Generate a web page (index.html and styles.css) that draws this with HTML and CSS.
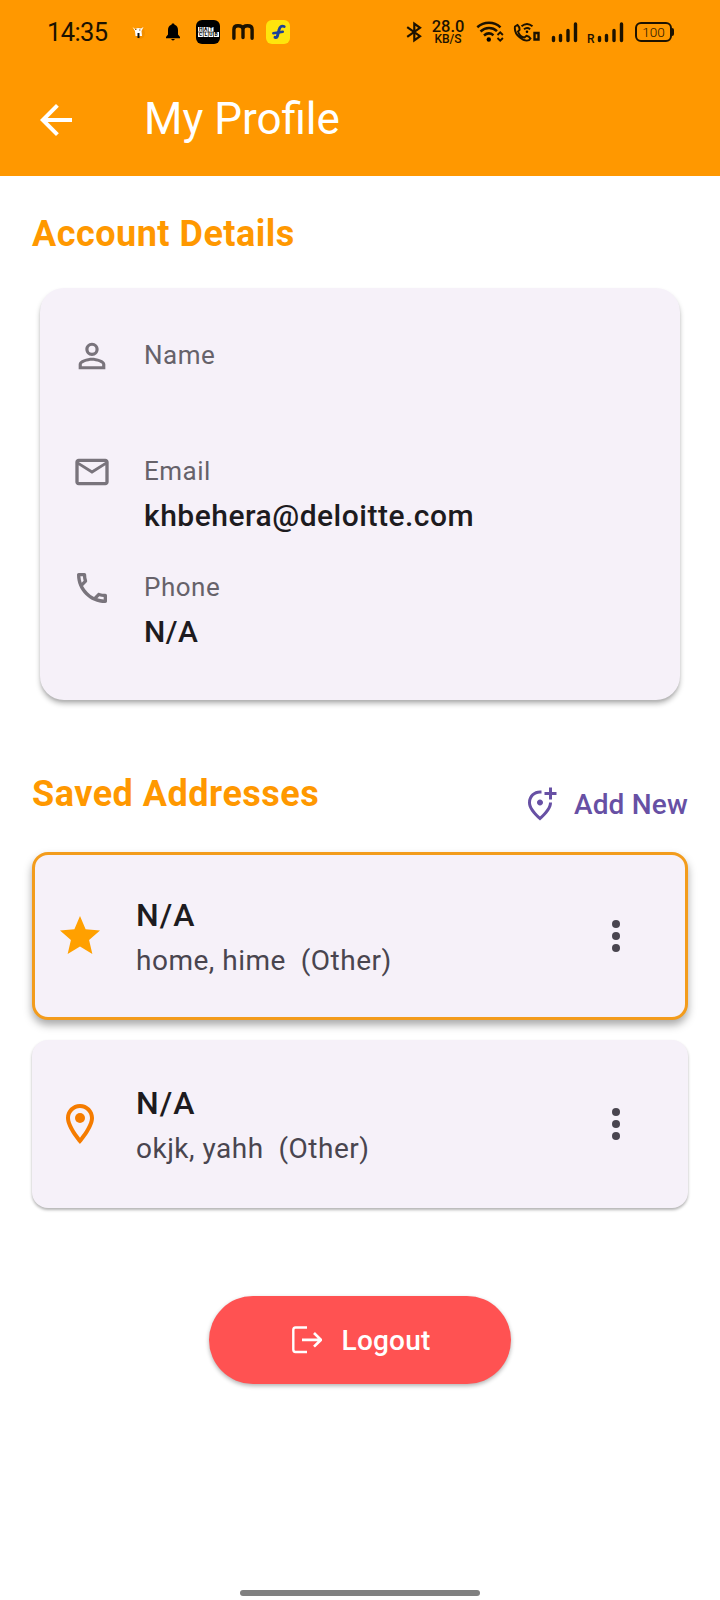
FILE: index.html
```html
<!DOCTYPE html>
<html lang="en">
<head>
<meta charset="utf-8">
<title>My Profile</title>
<link rel="stylesheet" href="styles.css">
</head>
<body>
<div class="screen">
  <header class="header">
    <div class="status">
      <span class="clock">14:35</span>
      <div class="notifications">
        <svg class="n-spark" width="16" height="24" viewBox="0 0 16 24"><ellipse cx="10" cy="13" rx="5" ry="6" fill="#d97d00" opacity=".35"/><path d="M2.500 7l2.500 2 3-1 3 .5 2.500-1.500-2 4 .5 5H5.500l-.5-5z" fill="#fff"/><path d="M8.500 13v5" stroke="#111" stroke-width="2"/><path d="M5 9.500h1.500M9 10h1.500" stroke="#8a6a30" stroke-width="1"/></svg>
        <svg class="n-bell" width="16" height="24" viewBox="0 0 16 24"><path d="M8 3.500c1 0 1.500.500 1.500 1.300C12 5.600 13 7.700 13 10v4.500l2 2.500v1.300H1V17l2-2.500V10c0-2.300 1-4.400 3.500-5.200C6.500 4 7 3.500 8 3.500zM6.300 19h3.400c0 .8-.7 1.400-1.700 1.400S6.300 19.800 6.300 19z"/></svg>
        <svg class="n-club" width="24" height="24" viewBox="0 0 24 24"><rect width="24" height="24" rx="6"/><path d="M2 7h15.500v5H23v5H2z" fill="#fff"/><path d="M7.300 7v10M12.300 7v10M17.500 12v5M2 12h16" stroke="#000" stroke-width=".6"/><text class="tile" x="3" y="11.300">H</text><text class="tile" x="8.100" y="11.300">A</text><text class="tile" x="13.500" y="11.300">T</text><text class="tile" x="3" y="16.300">C</text><text class="tile" x="8.600" y="16.300">L</text><text class="tile" x="13.200" y="16.300">U</text><text class="tile" x="18.600" y="16.300">B</text></svg>
        <svg class="n-m" width="22" height="24" viewBox="0 0 22 24"><path d="M1.900 18.300V9.500Q1.900 5.800 6 5.800Q11 5.800 11 9.500V17.500M11 9.500Q11 5.800 15.500 5.800Q20.100 5.800 20.100 9.500V18.300" fill="none" stroke="#1c1200" stroke-width="3.400" stroke-linecap="round"/></svg>
        <svg class="n-f" width="24" height="24" viewBox="0 0 24 24"><rect width="24" height="24" rx="6" fill="#ffe50d"/><path d="M18.200 6.500C15.300 5.500 13.800 6.800 13.200 9.500L11.300 16.500Q10.800 17.800 9 17.300" fill="none" stroke="#1d4298" stroke-width="2.900" stroke-linecap="round"/><path d="M7.300 13.300L16.800 11.700" stroke="#1d4298" stroke-width="2.500" stroke-linecap="round"/></svg>
      </div>
      <div class="system">
        <svg class="s-bt" width="16" height="24" viewBox="0 0 16 24"><path d="M1.200 7.200l12.800 9L8.300 20.300V3.700L14 7.800 1.200 16.800" fill="none" stroke="#1c1200" stroke-width="2.200"/></svg>
        <div class="speed"><b>28.0</b><span>KB/S</span></div>
        <svg class="s-wifi" width="28" height="24" viewBox="0 0 28 24"><g fill="none" stroke="#1c1200" stroke-width="2.500"><path d="M1.300 7.300C8 1.300 18 1.300 24.500 7.300"/><path d="M4.500 11.500c5-4.500 12-4.500 16.500-.3"/><path d="M8 15.500c3-2.600 6.500-2.600 9.500-.3"/><path d="M21.500 15l2.700-2.600 2.700 2.600M21.500 18l2.700 2.600 2.700-2.600" stroke-width="1.900"/></g><circle cx="12.800" cy="19.500" r="2.200"/></svg>
        <svg class="s-call" width="28" height="24" viewBox="0 0 28 24"><g fill="none" stroke="#1c1200" stroke-width="1.900"><path d="M2 6.500l2.500-1.500Q7 7.500 6.500 10L5 11.500c1 3 3.500 5.500 6.500 6l2-1.700q2.500.2 4 2.700l-1.500 1.700c-5 1.800-15.500-5-14-13.700z"/><path d="M8.500 6.300c3.500-3 7.500-3 11 0M11 9.300c2-1.700 4-1.700 6.200 0"/><path d="M21.500 13h4v6.500h-4z" stroke-width="2.400"/></g><circle cx="14" cy="11.700" r="1.300"/></svg>
        <svg class="s-signal" width="28" height="24" viewBox="0 0 28 24"><path d="M2.500 17.500v3M9.500 15.500v5M17 10.500v10M24.500 4v16.500" stroke="#1c1200" stroke-width="3.400" stroke-linecap="round"/></svg>
        <span class="roam">R</span>
        <svg class="s-signal2" width="28" height="24" viewBox="0 0 28 24"><path d="M2.500 17.500v3M9.500 15.500v5M17 10.500v10M24.500 4v16.500" stroke="#1c1200" stroke-width="3.400" stroke-linecap="round"/></svg>
        <div class="battery"><span>100</span></div><i class="nub"></i>
      </div>
    </div>
    <div class="appbar">
      <svg class="back" width="48" height="48" viewBox="0 0 24 24"><path d="M20 11H7.830l5.590-5.590L12 4l-8 8 8 8 1.410-1.410L7.830 13H20v-2z" fill="#fff"/></svg>
      <h1>My Profile</h1>
    </div>
  </header>

  <main class="content">
    <h2 class="section">Account Details</h2>
    <section class="account">
      <div class="field">
        <svg width="40" height="40" viewBox="0 0 24 24"><path d="M12 5.900a2.100 2.100 0 1 1 0 4.200 2.100 2.100 0 0 1 0-4.200m0 9c2.970 0 6.100 1.460 6.100 2.100v1.100H5.900V17c0-.640 3.130-2.100 6.100-2.100M12 4C9.790 4 8 5.790 8 8s1.790 4 4 4 4-1.790 4-4-1.790-4-4-4zm0 9c-2.670 0-8 1.340-8 4v3h16v-3c0-2.660-5.330-4-8-4z"/></svg>
        <div><p class="label">Name</p><p class="value"></p></div>
      </div>
      <div class="field">
        <svg width="40" height="40" viewBox="0 0 24 24"><path d="M22 6c0-1.100-.9-2-2-2H4c-1.100 0-2 .9-2 2v12c0 1.100.9 2 2 2h16c1.100 0 2-.9 2-2V6zm-2 0l-8 5-8-5h16zm0 12H4V8l8 5 8-5v10z"/></svg>
        <div><p class="label">Email</p><p class="value">khbehera@deloitte.com</p></div>
      </div>
      <div class="field">
        <svg width="40" height="40" viewBox="0 0 24 24"><path d="M6.540 5c.06.890.210 1.760.450 2.590l-1.200 1.200c-.410-1.200-.670-2.470-.760-3.790h1.510m9.860 12.020c.850.240 1.720.390 2.600.450v1.490c-1.320-.090-2.590-.350-3.800-.750l1.200-1.190M7.500 3H4c-.550 0-1 .450-1 1 0 9.390 7.610 17 17 17 .550 0 1-.450 1-1v-3.490c0-.550-.450-1-1-1-1.240 0-2.450-.200-3.570-.570-.100-.040-.210-.050-.310-.050-.260 0-.510.100-.710.290l-2.200 2.200c-2.830-1.450-5.150-3.760-6.590-6.590l2.200-2.200c.280-.280.360-.670.250-1.020C8.700 6.450 8.500 5.250 8.500 4c0-.550-.450-1-1-1z"/></svg>
        <div><p class="label">Phone</p><p class="value">N/A</p></div>
      </div>
    </section>

    <div class="section-row">
      <h2 class="section">Saved Addresses</h2>
      <a class="add">
        <svg width="36" height="36" viewBox="0 0 24 24"><path d="M20 1v3h3v2h-3v3h-2V6h-3V4h3V1h2zM12 13c1.100 0 2-.9 2-2s-.9-2-2-2-2 .9-2 2 .9 2 2 2zm1-9.940v2.020A5.440 5.440 0 0 0 12 5c-3.350 0-6 2.570-6 6.200 0 2.340 1.950 5.440 6 9.140 4.050-3.700 6-6.790 6-9.140V11h2v.2c0 3.320-2.670 7.250-8 11.800-5.330-4.550-8-8.480-8-11.800C4 6.220 7.800 3 12 3c.340 0 .670.020 1 .06z"/></svg>
        <span>Add New</span>
      </a>
    </div>

    <section class="addresses">
      <article class="address address--default">
        <svg class="lead" width="48" height="48" viewBox="0 0 24 24"><path d="M12 17.270L18.180 21l-1.640-7.030L22 9.240l-7.190-.610L12 2 9.190 8.630 2 9.240l5.460 4.730L5.820 21z" fill="#ffa000"/></svg>
        <div class="text"><p class="name">N/A</p><p class="detail">home, hime&nbsp; (Other)</p></div>
        <svg class="more" width="48" height="48" viewBox="0 0 24 24"><circle cx="12" cy="6" r="2"/><circle cx="12" cy="12" r="2"/><circle cx="12" cy="18" r="2"/></svg>
      </article>
      <article class="address">
        <svg class="lead" width="48" height="48" viewBox="0 0 24 24"><path d="M12 2C8.130 2 5 5.130 5 9c0 5.250 7 13 7 13s7-7.750 7-13c0-3.870-3.130-7-7-7zM7 9c0-2.760 2.240-5 5-5s5 2.240 5 5c0 2.880-2.880 7.190-5 9.880C9.920 16.210 7 11.850 7 9z" fill="#f57c00"/><circle cx="12" cy="9" r="2.500" fill="#f57c00"/></svg>
        <div class="text"><p class="name">N/A</p><p class="detail">okjk, yahh&nbsp; (Other)</p></div>
        <svg class="more" width="48" height="48" viewBox="0 0 24 24"><circle cx="12" cy="6" r="2"/><circle cx="12" cy="12" r="2"/><circle cx="12" cy="18" r="2"/></svg>
      </article>
    </section>

    <button class="logout">
      <svg width="32" height="32" viewBox="0 0 32 32" fill="none" stroke="#fff"><path d="M17 3.500H5.500Q3.300 3.500 3.300 6v19.500Q3.300 28 5.500 28H17" stroke-width="2.400"/><path d="M12 15.800h19M24 9l7 6.800-7 6.800" stroke-width="2.700"/></svg>
      <span>Logout</span>
    </button>
  </main>
  <div class="home"></div>
</div>
</body>
</html>
```

FILE: styles.css
```css
* { box-sizing: border-box; }
body { margin: 0; background: #fff; font-family: Roboto, "Liberation Sans", sans-serif; }
h1, h2, p { margin: 0; }
svg { display: block; flex: none; }

.screen { width: 720px; height: 1600px; display: flex; flex-direction: column; background: #fff; overflow: hidden; }
.header { height: 176px; background: #ff9800; flex: none; }

.status { height: 64px; display: flex; align-items: center; color: #1c1200; padding-left: 47px; }
.clock { width: 83px; font-size: 25.500px; line-height: 32px; font-weight: 400; letter-spacing: -0.600px; }
.notifications { width: 276px; display: flex; align-items: center; }
.n-bell { margin-left: 19px; }
.n-club { margin-left: 15px; }
.n-m { margin-left: 12px; }
.n-f { margin-left: 12px; }
.tile { font: 700 5px Roboto, sans-serif; }

.system { display: flex; align-items: center; }
.speed { width: 36px; margin-left: 8px; display: flex; flex-direction: column; align-items: center; }
.speed b { font-size: 16.500px; line-height: 13px; font-weight: 500; }
.speed span { font-size: 12px; line-height: 12px; font-weight: 500; }
.s-wifi { margin-left: 10px; }
.s-call { margin-left: 9px; }
.s-signal { margin-left: 10px; }
.roam { width: 9px; margin: 13px 0 0 8px; font-size: 12px; line-height: 12px; font-weight: 500; }
.s-signal2 { margin-left: 1px; }
.battery { width: 37px; height: 20px; margin-left: 10px; border: 2px solid #1c1200; border-radius: 6px; display: flex; align-items: center; justify-content: center; font-size: 13.500px; font-weight: 300; line-height: 16px; }
.nub { width: 2px; height: 8px; background: #1c1200; border-radius: 0 2px 2px 0; }

.appbar { height: 112px; display: flex; align-items: center; padding-left: 32px; color: #fff; }
.appbar h1 { margin: 0 0 2px 64px; font-size: 44px; line-height: 56px; font-weight: 400; }

.content { flex: 1; padding: 33px 32px 0; display: flex; flex-direction: column; }
.section { font-size: 36px; line-height: 51px; font-weight: 700; color: #ff9800; letter-spacing: 0.5px; }

.account { margin: 28px 8px 0; padding: 48px 32px; display: flex; flex-direction: column; gap: 32px; background: #f6f1f9; border-radius: 24px; box-shadow: 0 4px 5px rgba(0, 0, 0, .25), 0 2px 2px rgba(0, 0, 0, .08); }
.field { display: flex; gap: 32px; height: 84px; }
.field svg { fill: #79747c; }
.label { font-size: 26px; line-height: 38px; color: #66626a; letter-spacing: 0.5px; }
.value { margin-top: 6px; font-size: 30px; line-height: 40px; font-weight: 500; color: #1d1b20; letter-spacing: 0.5px; }

.section-row { height: 96px; margin-top: 56px; padding-top: 13px; display: flex; justify-content: space-between; }
.add { height: 36px; margin-top: 17px; display: flex; align-items: center; gap: 16px; color: #6750a4; font-size: 28px; font-weight: 500; letter-spacing: 0.2px; }
.add svg { fill: #6750a4; }

.addresses { display: flex; flex-direction: column; gap: 20px; }
.address { height: 168px; padding: 0 48px 0 24px; display: flex; align-items: center; background: #f6f1f9; border-radius: 16px; box-shadow: 0 2px 3px rgba(0, 0, 0, .3); }
.address--default { padding: 0 45px 0 21px; border: 3px solid #f39c1c; box-shadow: 0 5px 8px rgba(0, 0, 0, .34); }
.text { flex: 1; margin-left: 32px; }
.name { font-size: 32px; line-height: 48px; font-weight: 500; color: #1d1b20; letter-spacing: 1px; }
.detail { margin-top: 2px; font-size: 28px; line-height: 40px; color: #49454f; letter-spacing: 0.5px; }
.more { fill: #49454f; }

.logout { width: 302px; height: 88px; margin: 88px auto 0; padding: 0; border: 0; border-radius: 44px; display: flex; align-items: center; justify-content: center; gap: 20px; background: #ff5252; color: #fff; font: 500 28px Roboto, sans-serif; letter-spacing: 0.2px; box-shadow: 0 2px 4px rgba(0, 0, 0, .3); }
.home { width: 240px; height: 6px; margin: 0 auto 4px; border-radius: 3px; background: #808080; }
```
